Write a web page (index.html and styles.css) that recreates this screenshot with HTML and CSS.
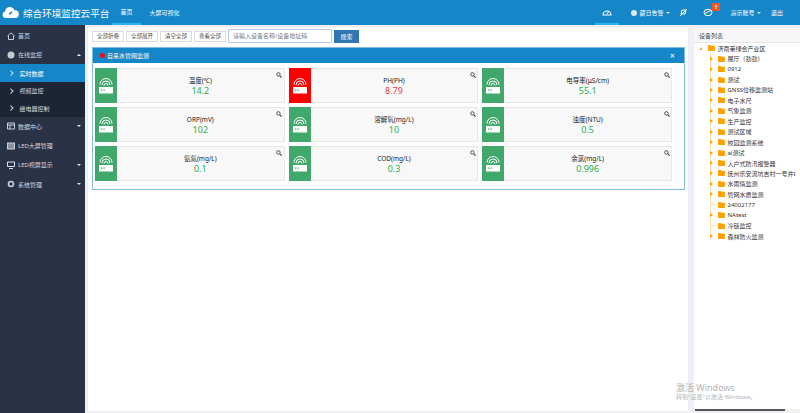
FILE: index.html
```html
<!DOCTYPE html>
<html lang="zh-CN">

<head>
    <meta charset="UTF-8">
    <meta name="viewport" content="width=device-width, initial-scale=1.0">
    <title>综合环境监控云平台</title>
    <link rel="stylesheet" href="styles.css">
</head>

<body>
    <svg class="defs" width="0" height="0">
        <symbol id="router" viewBox="0 0 16 16">
            <path d="M2 6.500a6 6 0 0 1 12 0M4 7a4 4 0 0 1 8 0M6 7.500a2 2 0 0 1 4 0" fill="none" stroke="#fff" stroke-width="1"/>
            <rect x="1" y="9" width="14" height="6.500" fill="#fff"/>
            <rect x="3" y="11.500" width="1.400" height="1.200" fill="#41a86b"/>
            <rect x="5.400" y="11.500" width="1.400" height="1.200" fill="#41a86b"/>
        </symbol>
        <symbol id="lens" viewBox="0 0 8 8">
            <circle cx="3.200" cy="3.200" r="2.300" fill="none" stroke="#333" stroke-width="1.100"/>
            <path d="M5 5l2.400 2.400" stroke="#333" stroke-width="1.400"/>
        </symbol>
        <symbol id="folder" viewBox="0 0 8 7">
            <path d="M0 0h3l1 1h4v6H0z" fill="#ffa200"/>
        </symbol>
    </svg>

    <header class="topbar">
        <div class="brand">
            <svg class="logo" viewBox="0 0 20 12">
                <path d="M4 12a3.600 3.600 0 0 1-.6-7.100A5.500 5.500 0 0 1 14 3.400 4.400 4.400 0 0 1 15.600 12z" fill="#fff"/>
                <path d="M7.500 8.500q.5-3 4-3.500-.5 3.500-4 3.500z" fill="#1587c8"/>
            </svg>
            <span class="brand-name">综合环境监控云平台</span>
        </div>
        <nav class="topnav">
            <a class="topnav-item active">首页</a>
            <a class="topnav-item">大屏可视化</a>
        </nav>
        <div class="toptools">
            <a class="tool tool-gauge">
                <svg width="10" height="8" viewBox="0 0 10 8"><path d="M1 7a4 4 0 1 1 8 0z" fill="none" stroke="#fff" stroke-width="1.100"/><path d="M5 6l2-3" stroke="#fff"/></svg>
            </a>
            <a class="tool tool-alarm"><i class="dot"></i>藏日告警<i class="caret"></i></a>
            <a class="tool tool-mute">
                <svg width="9" height="9" viewBox="0 0 9 9"><path d="M1 8L8 1M3 2h4l-1 4H2z" fill="none" stroke="#fff"/></svg>
            </a>
            <a class="tool tool-msg">
                <svg width="10" height="9" viewBox="0 0 10 9"><ellipse cx="5" cy="4.500" rx="4" ry="3.200" fill="none" stroke="#fff"/><path d="M1.500 5.500L8 2.500" stroke="#fff"/></svg>
                <span class="badge">1</span>
            </a>
            <a class="tool tool-user">演示账号<i class="caret"></i></a>
            <a class="tool tool-exit">退出</a>
        </div>
    </header>

    <div class="layout">
        <aside class="sidebar">
            <a class="menu-item"><svg class="menu-icon" viewBox="0 0 8 8"><path d="M.5 4L4 .8 7.500 4M1.500 3.500v4h5v-4" fill="none" stroke="#ccd"/></svg>首页</a>
            <a class="menu-item"><svg class="menu-icon" viewBox="0 0 8 8"><circle cx="4" cy="4" r="3.500" fill="#c6c9d0"/></svg>在线监控<i class="caret up"></i></a>
            <a class="menu-sub current"><i class="chev"></i>实时数据</a>
            <a class="menu-sub"><i class="chev"></i>视频监控</a>
            <a class="menu-sub"><i class="chev"></i>继电器控制</a>
            <a class="menu-item"><svg class="menu-icon" viewBox="0 0 8 8"><path d="M.5 1h7v6h-7zM.5 3h7M3 3v4" fill="none" stroke="#ccd"/></svg>数据中心<i class="caret"></i></a>
            <a class="menu-item"><svg class="menu-icon" viewBox="0 0 8 8"><rect x=".5" y="1" width="7" height="6" fill="#8d919c" stroke="#ccd"/></svg>LED大屏管理</a>
            <a class="menu-item"><svg class="menu-icon" viewBox="0 0 8 8"><path d="M.5 1h7v4.500h-7zM2 7.500h4" fill="none" stroke="#dde"/></svg>LED视屏显示<i class="caret"></i></a>
            <a class="menu-item"><svg class="menu-icon" viewBox="0 0 8 8"><circle cx="4" cy="4" r="2.500" fill="none" stroke="#ccd" stroke-width="1.600"/></svg>系统管理<i class="caret"></i></a>
        </aside>

        <main class="content">
            <div class="toolbar">
                <a class="btn">全部折叠</a>
                <a class="btn">全部展开</a>
                <a class="btn">清空全部</a>
                <a class="btn">查看全部</a>
                <input class="search-input" type="text" placeholder="请输入设备名称/设备地址码">
                <a class="btn-search">搜索</a>
            </div>

            <section class="panel">
                <div class="panel-head">
                    <span class="panel-title"><i class="red-dot"></i>自来水管网监测</span>
                    <span class="panel-close">×</span>
                </div>
                <div class="cards">
                    <div class="card">
                        <div class="card-icon"><svg><use href="#router"/></svg></div>
                        <div class="card-body"><div class="card-name">温度(℃)</div><div class="card-val">14.2</div></div>
                        <svg class="card-lens"><use href="#lens"/></svg>
                    </div>
                    <div class="card alarm">
                        <div class="card-icon"><svg><use href="#router"/></svg></div>
                        <div class="card-body"><div class="card-name">PH(PH)</div><div class="card-val">8.79</div></div>
                        <svg class="card-lens"><use href="#lens"/></svg>
                    </div>
                    <div class="card">
                        <div class="card-icon"><svg><use href="#router"/></svg></div>
                        <div class="card-body"><div class="card-name">电导率(μS/cm)</div><div class="card-val">55.1</div></div>
                        <svg class="card-lens"><use href="#lens"/></svg>
                    </div>
                    <div class="card">
                        <div class="card-icon"><svg><use href="#router"/></svg></div>
                        <div class="card-body"><div class="card-name">ORP(mV)</div><div class="card-val">102</div></div>
                        <svg class="card-lens"><use href="#lens"/></svg>
                    </div>
                    <div class="card">
                        <div class="card-icon"><svg><use href="#router"/></svg></div>
                        <div class="card-body"><div class="card-name">溶解氧(mg/L)</div><div class="card-val">10</div></div>
                        <svg class="card-lens"><use href="#lens"/></svg>
                    </div>
                    <div class="card">
                        <div class="card-icon"><svg><use href="#router"/></svg></div>
                        <div class="card-body"><div class="card-name">浊度(NTU)</div><div class="card-val">0.5</div></div>
                        <svg class="card-lens"><use href="#lens"/></svg>
                    </div>
                    <div class="card">
                        <div class="card-icon"><svg><use href="#router"/></svg></div>
                        <div class="card-body"><div class="card-name">氨氮(mg/L)</div><div class="card-val">0.1</div></div>
                        <svg class="card-lens"><use href="#lens"/></svg>
                    </div>
                    <div class="card">
                        <div class="card-icon"><svg><use href="#router"/></svg></div>
                        <div class="card-body"><div class="card-name">COD(mg/L)</div><div class="card-val">0.3</div></div>
                        <svg class="card-lens"><use href="#lens"/></svg>
                    </div>
                    <div class="card">
                        <div class="card-icon"><svg><use href="#router"/></svg></div>
                        <div class="card-body"><div class="card-name">余氯(mg/L)</div><div class="card-val">0.996</div></div>
                        <svg class="card-lens"><use href="#lens"/></svg>
                    </div>
                </div>
            </section>
        </main>

        <aside class="devices">
            <div class="devices-head">设备列表</div>
            <ul class="tree">
                <li class="tree-root"><i class="arrow-open"></i><svg class="folder"><use href="#folder"/></svg>济南莱绿合产业区</li>
                <li><i class="arrow"></i><svg class="folder"><use href="#folder"/></svg>展厅（劲劲）</li>
                <li><i class="arrow"></i><svg class="folder"><use href="#folder"/></svg>0912</li>
                <li><i class="arrow"></i><svg class="folder"><use href="#folder"/></svg>测试</li>
                <li><i class="arrow"></i><svg class="folder"><use href="#folder"/></svg>GNSS位移监测站</li>
                <li><i class="arrow"></i><svg class="folder"><use href="#folder"/></svg>电子水尺</li>
                <li><i class="arrow"></i><svg class="folder"><use href="#folder"/></svg>气象监测</li>
                <li><i class="arrow"></i><svg class="folder"><use href="#folder"/></svg>生产监控</li>
                <li><i class="arrow"></i><svg class="folder"><use href="#folder"/></svg>测试区域</li>
                <li><i class="arrow"></i><svg class="folder"><use href="#folder"/></svg>校园监测系统</li>
                <li><i class="arrow"></i><svg class="folder"><use href="#folder"/></svg>ai测试</li>
                <li><i class="arrow"></i><svg class="folder"><use href="#folder"/></svg>入户式防汛报警器</li>
                <li><i class="arrow"></i><svg class="folder"><use href="#folder"/></svg>抚州乐安流坑吉村一号井I</li>
                <li><i class="arrow"></i><svg class="folder"><use href="#folder"/></svg>水雨情监测</li>
                <li><i class="arrow"></i><svg class="folder"><use href="#folder"/></svg>管网水质监测</li>
                <li><i class="leaf"></i><svg class="folder"><use href="#folder"/></svg>24002177</li>
                <li><i class="arrow"></i><svg class="folder"><use href="#folder"/></svg>NAtest</li>
                <li><i class="leaf"></i><svg class="folder"><use href="#folder"/></svg>冷链监控</li>
                <li class="tree-last"><i class="arrow"></i><svg class="folder"><use href="#folder"/></svg>森林防火监测</li>
            </ul>
            <div class="hscroll"><div class="hscroll-thumb"></div></div>
        </aside>
    </div>

    <div class="watermark">
        <div class="wm-big">激活 Windows</div>
        <div class="wm-small">转到"设置"以激活 Windows。</div>
    </div>
</body>

</html>
```

FILE: styles.css
```css
* {
    box-sizing: border-box;
}

body {
    margin: 0;
    width: 800px;
    height: 413px;
    overflow: hidden;
    background-color: #eef0f5;
    font-family: "Noto Sans", "Noto Sans CJK SC", sans-serif;
    font-size: 6px;
    color: #333;
    display: flex;
    flex-direction: column;
    position: relative;
}

.defs {
    position: absolute;
}

i {
    display: block;
}

/* top bar */
.topbar {
    height: 25px;
    flex: none;
    background-color: #1587c8;
    color: #fff;
    display: flex;
    align-items: stretch;
}

.brand {
    width: 112px;
    display: flex;
    align-items: center;
    padding-left: 2px;
}

.logo {
    width: 18px;
    height: 11px;
    margin-right: 3px;
}

.brand-name {
    font-size: 9.600px;
    white-space: nowrap;
}

.topnav {
    display: flex;
}

.topnav-item {
    width: 29px;
    display: flex;
    align-items: center;
    justify-content: center;
    white-space: nowrap;
}

.topnav-item + .topnav-item {
    margin-left: 9px;
}

.topnav-item.active {
    border-bottom: 2px solid #2bb3f0;
}

.toptools {
    margin-left: auto;
    display: flex;
    align-items: stretch;
}

.tool {
    display: flex;
    align-items: center;
    justify-content: center;
    white-space: nowrap;
    position: relative;
}

.tool-gauge {
    width: 24px;
    border-bottom: 2px solid #2bb3f0;
}

.tool-alarm {
    margin-left: 12px;
    width: 39px;
}

.tool-alarm .dot {
    width: 6px;
    height: 6px;
    border-radius: 50%;
    background-color: #dfe9f2;
    margin-right: 2px;
}

.tool-mute {
    width: 14px;
    margin-left: 6px;
}

.tool-msg {
    width: 14px;
    margin-left: 11px;
}

.badge {
    position: absolute;
    top: 3px;
    left: 11px;
    width: 8px;
    height: 8px;
    background-color: #f0552b;
    color: #fff;
    font-size: 5px;
    font-weight: bold;
    line-height: 8px;
    text-align: center;
}

.tool-user {
    margin-left: 15px;
    width: 31px;
}

.tool-exit {
    margin-left: 10px;
    width: 12px;
    margin-right: 17px;
}

.caret {
    width: 0;
    height: 0;
    margin-left: 2px;
    border-left: 2.500px solid transparent;
    border-right: 2.500px solid transparent;
    border-top: 2.500px solid #dfe6ee;
}

.caret.up {
    border-top: 0;
    border-bottom: 2.500px solid #fff;
}

/* layout */
.layout {
    flex: 1;
    display: flex;
    min-height: 0;
}

.sidebar {
    width: 85px;
    flex: none;
    background-color: #2a3246;
    color: #d5d7dc;
    padding-top: 1px;
}

.menu-item {
    height: 19.200px;
    display: flex;
    align-items: center;
    padding-left: 7px;
    white-space: nowrap;
}

.menu-icon {
    width: 8px;
    height: 8px;
    margin-right: 3px;
    flex: none;
}

.menu-item .caret {
    margin-left: auto;
    margin-right: 4px;
}

.menu-sub {
    height: 17.500px;
    display: flex;
    align-items: center;
    padding-left: 9px;
    background-color: #1d2434;
    white-space: nowrap;
}

.menu-sub.current {
    background-color: #1587c8;
    color: #fff;
}

.chev {
    width: 3.500px;
    height: 3.500px;
    border-top: 1px solid #d5d7dc;
    border-right: 1px solid #d5d7dc;
    transform: rotate(45deg);
    margin-right: 7px;
}

/* main */
.content {
    width: 600px;
    flex: none;
    margin: 2px 0 2px 3px;
    background-color: #fff;
    box-shadow: 0 0 1px #d5d8e0;
    padding: 2.500px 3.500px 0 4px;
}

.toolbar {
    height: 14px;
    display: flex;
    align-items: center;
    padding-bottom: 1px;
}

.btn {
    width: 32px;
    height: 11px;
    border: 1px solid #dcdcdc;
    background-color: #fff;
    color: #444;
    font-size: 5.500px;
    display: flex;
    align-items: center;
    justify-content: center;
    margin-right: 2px;
    white-space: nowrap;
}

.search-input {
    width: 104px;
    height: 14px;
    border: 1px solid #b9cde0;
    border-radius: 1px;
    padding: 0 4px;
    font-family: inherit;
    font-size: 6px;
    outline: none;
}

.search-input::placeholder {
    color: #777;
}

.btn-search {
    width: 25px;
    height: 13px;
    margin-left: 2px;
    background-color: #2f78b4;
    color: #fff;
    display: flex;
    align-items: center;
    justify-content: center;
}

.panel {
    width: 593px;
    height: 143px;
    margin-top: 3.500px;
    border: 1px solid #7fbde4;
    padding-bottom: 8px;
}

.panel-head {
    height: 15px;
    background-color: #1587c8;
    color: #fff;
    display: flex;
    align-items: center;
    justify-content: space-between;
    padding: 0 9px 0 7px;
}

.panel-title {
    display: flex;
    align-items: center;
}

.red-dot {
    width: 5px;
    height: 5px;
    flex: none;
    border-radius: 50%;
    background-color: #f30b1c;
    margin-right: 2px;
}

.panel-close {
    font-size: 9px;
    line-height: 1;
}

.cards {
    display: grid;
    grid-template-columns: repeat(3, 1fr);
    gap: 4px;
    padding: 5px 12px 0 2px;
}

.card {
    height: 35px;
    display: flex;
    background-color: #f8f8f8;
    border: 1px solid #e7e7e7;
    border-left: 0;
    position: relative;
}

.card-icon {
    width: 22px;
    flex: none;
    margin-top: -1px;
    margin-bottom: -1px;
    background-color: #41a86b;
    display: flex;
    align-items: center;
    justify-content: center;
}

.card-icon svg {
    width: 16px;
    height: 16px;
}

.card.alarm .card-icon {
    background-color: #fe0000;
}

.card-body {
    flex: 1;
    text-align: center;
    padding-top: 7px;
}

.card-name {
    font-size: 6.500px;
    line-height: 9px;
    color: #222;
}

.card-val {
    font-size: 9px;
    line-height: 12px;
    color: #2fae4e;
}

.card.alarm .card-val {
    color: #f03c3c;
}

.card-lens {
    position: absolute;
    top: 3px;
    right: 1.500px;
    width: 6px;
    height: 6px;
}

/* device tree */
.devices {
    width: 106px;
    flex: none;
    margin: 3px 0 2px 6px;
    background-color: #fff;
    display: flex;
    flex-direction: column;
}

.devices-head {
    height: 15px;
    flex: none;
    background-color: #f7f7f7;
    border-bottom: 1px solid #e5e5e5;
    padding-left: 5px;
    display: flex;
    align-items: center;
    color: #444;
}

.tree {
    flex: 1;
    list-style: none;
    margin: 0;
    padding: 0 0 0 4px;
    overflow: hidden;
}

.tree li {
    height: 10.440px;
    display: flex;
    align-items: center;
    white-space: nowrap;
    padding-left: 12px;
    position: relative;
}

.tree li::before {
    content: "";
    position: absolute;
    left: 12px;
    top: 0;
    bottom: 0;
    width: 1px;
    background-color: #ffe3ad;
}

.tree li.tree-root {
    padding-left: 0;
}

.tree li.tree-root::before {
    display: none;
}

.tree li.tree-last::before {
    bottom: 50%;
}

.arrow {
    width: 0;
    height: 0;
    border-top: 2px solid transparent;
    border-bottom: 2px solid transparent;
    border-left: 3px solid #ffa200;
    margin-right: 5px;
    position: relative;
    flex: none;
}

.leaf {
    width: 6px;
    height: 1px;
    background-color: #ffe3ad;
    margin-right: 2px;
    flex: none;
}

.arrow-open {
    width: 0;
    height: 0;
    border-bottom: 3px solid #ffa200;
    border-left: 3px solid transparent;
    margin-left: 1px;
    margin-right: 6px;
    flex: none;
}

.folder {
    width: 7px;
    height: 6px;
    margin-right: 2.500px;
    flex: none;
}

.hscroll {
    height: 2px;
    flex: none;
    background-color: #f1f1f1;
}

.hscroll-thumb {
    width: 90px;
    height: 100%;
    margin-left: 1px;
    background-color: #55565a;
}

.watermark {
    position: absolute;
    left: 676px;
    top: 382px;
    color: #b4b4b4;
    pointer-events: none;
}

.wm-big {
    font-size: 9px;
    line-height: 11px;
}

.wm-small {
    font-size: 6px;
    line-height: 9px;
}
```
